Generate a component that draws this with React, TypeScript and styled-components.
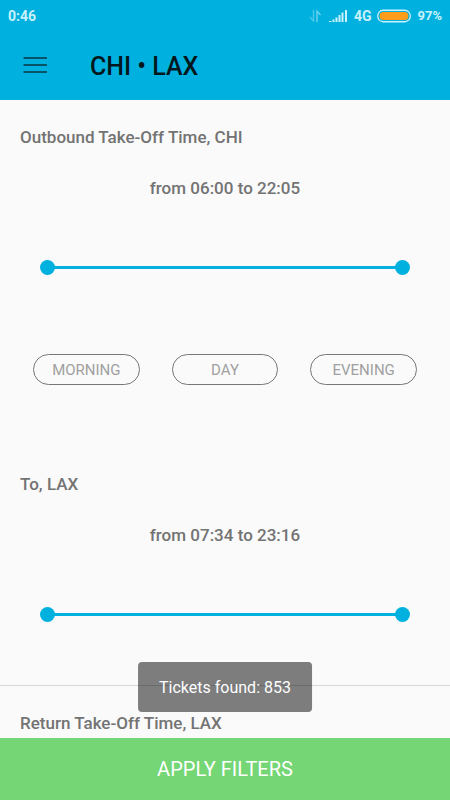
import React, { useState } from "react";
import styled, { createGlobalStyle } from "styled-components";

const GlobalStyle = createGlobalStyle`
  *, *::before, *::after { box-sizing: border-box; }
  body {
    margin: 0;
    background: #fafafa;
    font-family: Roboto, "Liberation Sans", sans-serif;
  }
  button, input { font-family: inherit; }
`;

const Screen = styled.div`
  position: relative;
  display: flex;
  flex-direction: column;
  height: 100vh;
  overflow: hidden;
`;

const Header = styled.header`
  flex: none;
  background: #00b1df;
`;

const StatusBar = styled.div`
  display: flex;
  align-items: center;
  justify-content: space-between;
  height: 32px;
  padding: 0 8px;
  color: #c9f1fb;
  font-size: 14px;
  font-weight: 700;
  line-height: 16px;
`;

const StatusGroup = styled.div`
  display: flex;
  align-items: center;
  gap: 6px;
`;

const Percent = styled.span`
  font-size: 13px;
`;

const Toolbar = styled.div`
  display: flex;
  align-items: center;
  gap: 43px;
  height: 68px;
  padding: 0 23px;
`;

const MenuButton = styled.button`
  display: flex;
  padding: 0 0 2px;
  border: 0;
  background: none;
  cursor: pointer;
`;

const Title = styled.h1`
  margin: 0;
  padding-top: 2px;
  color: #04171d;
  font-size: 25px;
  font-weight: 500;
  line-height: 32px;
`;

const Content = styled.main`
  flex: 1;
  min-height: 0;
  overflow: hidden;
`;

const Section = styled.section<{ $divided?: boolean }>`
  padding: 25px 0 ${(p) => (p.$divided ? 63 : 62)}px;
  border-bottom: ${(p) => (p.$divided ? "1px solid #d5d7d8" : "0")};
`;

const SectionTitle = styled.h2`
  margin: 0;
  padding: 0 20px;
  color: #737373;
  font-size: 17px;
  font-weight: 500;
  line-height: 24px;
`;

const RangeLabel = styled.p`
  margin: 27px 0 60px;
  color: #737373;
  font-size: 17px;
  font-weight: 500;
  line-height: 24px;
  text-align: center;
`;

const RangeTrack = styled.div`
  display: grid;
  align-items: center;
  margin: 0 40px;

  &::before {
    content: "";
    grid-area: 1 / 1;
    height: 3px;
    margin: 0 7px;
    background: #00b1df;
  }
`;

const RangeInput = styled.input`
  grid-area: 1 / 1;
  width: 100%;
  height: 15px;
  margin: 0;
  appearance: none;
  background: none;
  pointer-events: none;

  &::-webkit-slider-thumb {
    appearance: none;
    width: 15px;
    height: 15px;
    border: 0;
    border-radius: 50%;
    background: #00b1df;
    pointer-events: auto;
    cursor: pointer;
  }
`;

const Chips = styled.div`
  display: grid;
  grid-template-columns: repeat(3, 1fr);
  gap: 32px;
  margin: 79px 0 0;
  padding: 0 33px;
`;

const Chip = styled.button`
  height: 31px;
  padding: 0;
  border: 1px solid #777777;
  border-radius: 16px;
  background: none;
  color: #a0a0a0;
  font-size: 15px;
  line-height: 20px;
  cursor: pointer;
`;

const Toast = styled.div`
  position: absolute;
  bottom: 88px;
  left: 50%;
  transform: translateX(-50%);
  padding: 14px 21px 12px;
  border-radius: 4px;
  background: rgba(0, 0, 0, 0.5);
  color: #ffffff;
  font-size: 16px;
  line-height: 24px;
  white-space: nowrap;
`;

const ApplyButton = styled.button`
  flex: none;
  height: 62px;
  padding: 0;
  border: 0;
  background: #74d674;
  color: #ffffff;
  font-size: 20px;
  line-height: 24px;
  cursor: pointer;
`;

const formatTime = (minutes: number) =>
  `${String(Math.floor(minutes / 60)).padStart(2, "0")}:${String(minutes % 60).padStart(2, "0")}`;

const DataIcon = () => (
  <svg width="14" height="14" viewBox="0 0 14 14" fill="none" strokeWidth="1.4" aria-hidden="true">
    <path d="M4.500 1v11L1 8" stroke="#4cc8e9" />
    <path d="M8 13V2l3.500 4" stroke="#70d2ec" />
  </svg>
);

const SignalIcon = () => (
  <svg width="19" height="14" viewBox="0 0 19 14" fill="#c9f1fb" aria-hidden="true">
    <path d="M0 12h2.500v1H0zM3.500 10.500h2V13h-2zM6.500 8.500h2V13h-2zM9.500 6h2v7h-2zM12.500 3.500h2V13h-2zM16 1h2v12h-2z" />
  </svg>
);

const BatteryIcon = () => (
  <svg width="34" height="14" viewBox="0 0 34 14" aria-hidden="true">
    <rect x="0.750" y="1.250" width="32.500" height="11.500" rx="5.500" fill="none" stroke="#c9f1fb" strokeWidth="1.300" />
    <rect x="2.700" y="3" width="28.600" height="8" rx="3.500" fill="#ff9c1a" />
  </svg>
);

const MenuIcon = () => (
  <svg width="24" height="18" viewBox="0 0 24 18" stroke="#075468" strokeWidth="2" aria-hidden="true">
    <path d="M0.500 2H24M0.500 9H24M0.500 16H24" />
  </svg>
);

type TimeRangeProps = { name: string; min: number; max: number };

function TimeRange({ name, min, max }: TimeRangeProps) {
  const [from, setFrom] = useState(min);
  const [to, setTo] = useState(max);
  return (
    <>
      <RangeLabel>
        from {formatTime(from)} to {formatTime(to)}
      </RangeLabel>
      <RangeTrack>
        <RangeInput
          type="range"
          aria-label={`${name}, earliest`}
          min={min}
          max={max}
          value={from}
          onChange={(e) => setFrom(Math.min(Number(e.target.value), to))}
        />
        <RangeInput
          type="range"
          aria-label={`${name}, latest`}
          min={min}
          max={max}
          value={to}
          onChange={(e) => setTo(Math.max(Number(e.target.value), from))}
        />
      </RangeTrack>
    </>
  );
}

export default function App() {
  return (
    <Screen>
      <GlobalStyle />
      <Header>
        <StatusBar>
          <span>0:46</span>
          <StatusGroup>
            <DataIcon />
            <SignalIcon />
            <span>4G</span>
            <BatteryIcon />
            <Percent>97%</Percent>
          </StatusGroup>
        </StatusBar>
        <Toolbar>
          <MenuButton type="button" aria-label="Menu">
            <MenuIcon />
          </MenuButton>
          <Title>CHI • LAX</Title>
        </Toolbar>
      </Header>
      <Content>
        <Section>
          <SectionTitle>Outbound Take-Off Time, CHI</SectionTitle>
          <TimeRange name="Take-off time" min={360} max={1325} />
          <Chips>
            <Chip type="button">MORNING</Chip>
            <Chip type="button">DAY</Chip>
            <Chip type="button">EVENING</Chip>
          </Chips>
        </Section>
        <Section $divided>
          <SectionTitle>To, LAX</SectionTitle>
          <TimeRange name="Arrival time" min={454} max={1396} />
        </Section>
        <Section>
          <SectionTitle>Return Take-Off Time, LAX</SectionTitle>
        </Section>
      </Content>
      <ApplyButton type="button">APPLY FILTERS</ApplyButton>
      <Toast role="status">Tickets found: 853</Toast>
    </Screen>
  );
}
